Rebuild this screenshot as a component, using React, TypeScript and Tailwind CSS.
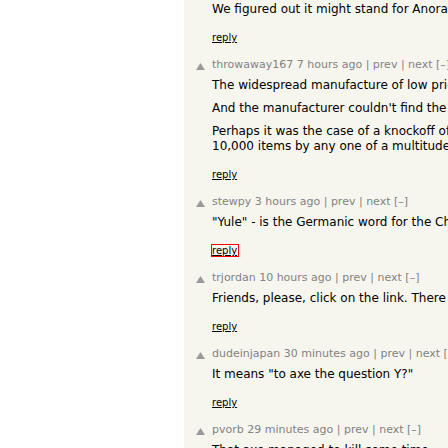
import React from 'react';

interface Comment {
    user?: string;
    age?: string;
    paras: string[][];
    focused?: boolean;
}

const comments: Comment[] = [
    { paras: [['We figured out it might stand for Anorak, the Norse god of weather and coats.']] },
    {
        user: 'throwaway167',
        age: '7 hours ago',
        paras: [
            ['The widespread manufacture of low priced goods means you will see oddities like these.'],
            ['And the manufacturer couldn\'t find the word for it in the dictionary.'],
            ['Perhaps it was the case of a knockoff of a knockoff,', '10,000 items by any one of a multitude of small Chinese shops.'],
        ],
    },
    { user: 'stewpy', age: '3 hours ago', paras: [['"Yule" - is the Germanic word for the Christmas holidays.']], focused: true },
    { user: 'trjordan', age: '10 hours ago', paras: [['Friends, please, click on the link. There is an answer.']] },
    { user: 'dudeinjapan', age: '30 minutes ago', paras: [['It means "to axe the question Y?"']] },
    { user: 'pvorb', age: '29 minutes ago', paras: [['That axe managed to kill some time.']] },
    { user: 'karlzt', age: '8 hours ago', paras: [] },
];

const Arrow = () => (
    <svg width="9" height="7" viewBox="0 0 9 7" className="mt-[5px]">
        <polygon points="4.5,0 9,7 0,7" fill="#9a9a9a" />
    </svg>
);

const CommentRow = ({ c }: { c: Comment }) => (
    <div className="flex">
        <div className="w-[28px] shrink-0 flex justify-center pl-[5px]">
            {c.user && <Arrow />}
        </div>
        <div className="flex-1 min-w-0">
            {c.user && (
                <div className="text-[11px] leading-[14px] text-[#828282] whitespace-nowrap mb-[6px]">
                    {c.user} {c.age} | prev | next [–]
                </div>
            )}
            {c.paras.map((p, i) => (
                <div key={i} className="text-[12px] leading-[15px] text-black whitespace-nowrap mb-[8px]">
                    {p.map((line, j) => (
                        <div key={j}>{line}</div>
                    ))}
                </div>
            ))}
            {c.paras.length > 0 && (
                <div className="mb-[10px] -mt-[1px]">
                    <span
                        className={
                            c.focused
                                ? 'inline-block text-[10px] leading-[11px] text-black underline border border-[#ff0000] -ml-[1px] pr-[1px]'
                                : 'inline-block text-[10px] leading-[11px] text-black underline border border-transparent -ml-[1px] pr-[1px]'
                        }
                    >
                        reply
                    </span>
                </div>
            )}
        </div>
    </div>
);

export default function App() {
    return (
        <div className="h-[448px] w-[448px] overflow-hidden bg-white flex" style={{ fontFamily: '"DejaVu Sans", Verdana, sans-serif' }}>
            <div className="w-[184px] shrink-0" />
            <div className="flex-1 bg-[#f6f6ef] pt-[2px] overflow-hidden">
                {comments.map((c, i) => (
                    <CommentRow key={i} c={c} />
                ))}
            </div>
        </div>
    );
}
